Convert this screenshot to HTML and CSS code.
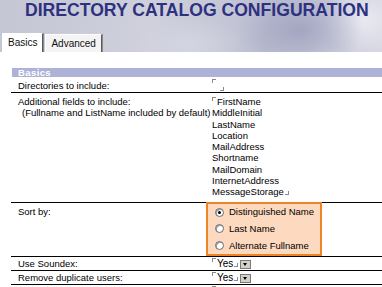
FILE: index.html
```html
<!DOCTYPE html>
<html>
<head>
<meta charset="utf-8">
<link rel="stylesheet" href="styles.css">
</head>
<body>
<div class="header">
  <h1 class="title">DIRECTORY CATALOG CONFIGURATION</h1>
  <div class="tabs">
    <div class="tab active">Basics</div>
    <div class="tab">Advanced</div>
  </div>
</div>
<div class="content">
  <div class="section-bar">Basics</div>
  <div class="row row-dirs">
    <div class="label">Directories to include:</div>
    <div class="value empty-field"><span class="mk-start blk"></span><span class="mk-end blk indent"></span></div>
  </div>
  <div class="row row-fields">
    <div class="label">Additional fields to include:<br><span class="sub">(Fullname and ListName included by default)</span></div>
    <div class="value list">
      <div><span class="mk-start"></span>FirstName</div>
      <div>MiddleInitial</div>
      <div>LastName</div>
      <div>Location</div>
      <div>MailAddress</div>
      <div>Shortname</div>
      <div>MailDomain</div>
      <div>InternetAddress</div>
      <div>MessageStorage<span class="mk-end"></span></div>
    </div>
  </div>
  <div class="row row-sort">
    <div class="label">Sort by:</div>
    <div class="value">
      <div class="radio-box">
        <div class="radio-item"><span class="radio checked"></span>Distinguished Name</div>
        <div class="radio-item"><span class="radio"></span>Last Name</div>
        <div class="radio-item"><span class="radio"></span>Alternate Fullname</div>
      </div>
    </div>
  </div>
  <div class="row row-small">
    <div class="label">Use Soundex:</div>
    <div class="value"><span class="mk-start"></span>Yes<span class="mk-end"></span><span class="dd"></span></div>
  </div>
  <div class="row row-small">
    <div class="label">Remove duplicate users:</div>
    <div class="value"><span class="mk-start"></span>Yes<span class="mk-end"></span><span class="dd"></span></div>
  </div>
  <div class="row row-small">
    <div class="label">Group types:</div>
    <div class="value"><span class="mk-start"></span>Mail and Multi-purpose<span class="mk-end"></span><span class="dd"></span></div>
  </div>
</div>
</body>
</html>
```
FILE: styles.css
```css
html, body {
  margin: 0;
  padding: 0;
  background: #ffffff;
  overflow: hidden;
}
body {
  width: 382px;
  height: 287px;
  font-family: "Liberation Sans", Arial, sans-serif;
  font-size: 9.5px;
  color: #000;
}
.header {
  height: 52px;
  background:
    radial-gradient(ellipse 90px 60px at 300px 30px, rgba(150,152,185,0.7), rgba(150,152,185,0) 70%),
    radial-gradient(ellipse 60px 50px at 365px 20px, rgba(235,236,242,0.9), rgba(235,236,242,0) 70%),
    radial-gradient(ellipse 80px 40px at 190px 45px, rgba(215,216,228,0.8), rgba(215,216,228,0) 70%),
    linear-gradient(100deg, #c4c6d4 0%, #cfd0dc 40%, #bdbfd2 70%, #d6d7e2 100%);
  display: flex;
  flex-direction: column;
  justify-content: space-between;
  overflow: hidden;
}
.title {
  margin: 0;
  padding: 1px 0 0 25px;
  font-family: "Liberation Sans", Arial, sans-serif;
  font-weight: bold;
  font-size: 17.6px;
  line-height: 18px;
  color: #2d3180;
  white-space: nowrap;
}
.tabs {
  display: flex;
  align-items: flex-end;
  padding-left: 2px;
  gap: 2px;
  height: 18px;
}
.tab {
  height: 17px;
  line-height: 17px;
  padding: 0 5px;
  font-size: 10px;
  background: #f4f4f4;
  border-top: 1px solid #ffffff;
  border-left: 1px solid #ffffff;
  border-right: 1px solid #5a5a5a;
  box-shadow: 1px 0 0 #8a8a8a;
  color: #111;
}
.tab.active {
  height: 18px;
  background: #ffffff;
}
.content {
  padding: 16px 0 0 11px;
}
.section-bar {
  margin-left: 1px;
  height: 9px;
  line-height: 9px;
  background: #afb2d7;
  color: #ffffff;
  font-weight: bold;
  font-size: 9.5px;
  letter-spacing: 0.4px;
  padding-left: 6px;
}
.row {
  display: flex;
  border-top: 1px solid #000;
  line-height: 11.25px;
}
.row-dirs {
  border-top: none;
  height: 15px;
}
.label {
  width: 194px;
  padding-left: 7px;
  flex: none;
  white-space: nowrap;
}
.label .sub {
  padding-left: 4px;
}
.row-dirs .label {
  padding-top: 3px;
}
.row-sort .label {
  padding-top: 3px;
}
.value {
  flex: 1;
  white-space: nowrap;
}
.empty-field {
  padding-top: 1px;
}
.mk-start {
  display: inline-block;
  width: 3px;
  height: 3px;
  border-left: 1px solid #8a8a8a;
  border-top: 1px solid #8a8a8a;
  vertical-align: top;
  margin-top: 1px;
  margin-right: 1px;
}
.mk-end {
  display: inline-block;
  width: 3px;
  height: 3px;
  border-right: 1px solid #8a8a8a;
  border-bottom: 1px solid #8a8a8a;
  vertical-align: baseline;
  margin-left: 1px;
  margin-right: 1px;
}
.blk {
  display: block;
}
.mk-end.indent {
  margin: 4px 0 0 8px;
}
.row-fields {
  padding-top: 3px;
  box-sizing: border-box;
  height: 110px;
}
.row-sort {
  height: 53px;
}
.radio-box {
  margin-left: -6px;
  margin-top: -1px;
  height: 50px;
  border: 2px solid #ef8424;
  background: #fcd9bf;
  display: flex;
  flex-direction: column;
  justify-content: space-around;
  padding: 0 0 0 7px;
  box-sizing: content-box;
  width: 105px;
}
.radio-item {
  display: flex;
  align-items: center;
  gap: 5px;
  font-size: 9.5px;
  line-height: 12px;
}
.radio {
  width: 7px;
  height: 7px;
  border-radius: 50%;
  background: #ffffff;
  border: 1px solid #6b6b6b;
  box-shadow: inset 1px 1px 0 #a0a0a0;
  position: relative;
  flex: none;
}
.radio.checked::after {
  content: "";
  position: absolute;
  left: 2px;
  top: 2px;
  width: 3px;
  height: 3px;
  border-radius: 50%;
  background: #000;
}
.row-small {
  height: 13px;
  line-height: 13px;
}
.row-small .value {
  font-size: 10px;
}
.dd {
  display: inline-block;
  width: 9px;
  height: 7px;
  margin-left: 1px;
  background: #d4d0c8;
  border: 1px solid #7a7a7a;
  vertical-align: middle;
  position: relative;
}
.dd::after {
  content: "";
  position: absolute;
  left: 2px;
  top: 2px;
  border-left: 2.5px solid transparent;
  border-right: 2.5px solid transparent;
  border-top: 3px solid #000;
}
```
